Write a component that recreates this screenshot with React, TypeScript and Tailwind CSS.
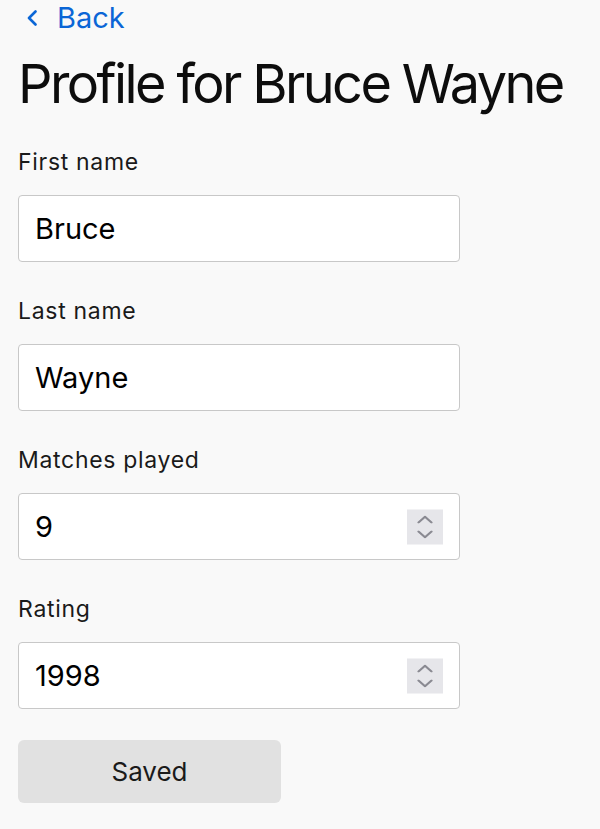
import { useState } from "react";

function Spinner() {
  return (
    <div className="absolute right-[17px] top-1/2 -translate-y-1/2 flex h-[35px] w-[36px] flex-col items-center justify-center gap-[7px] bg-[#e6e6ea]">
      <svg width="16" height="8" viewBox="0 0 16 8" fill="none">
        <path d="M1.5 7L8 1.2L14.5 7" stroke="#8a8a92" strokeWidth="2.2" strokeLinecap="round" strokeLinejoin="round" />
      </svg>
      <svg width="16" height="8" viewBox="0 0 16 8" fill="none">
        <path d="M1.5 1L8 6.8L14.5 1" stroke="#8a8a92" strokeWidth="2.2" strokeLinecap="round" strokeLinejoin="round" />
      </svg>
    </div>
  );
}

function Field({
  label,
  value,
  onChange,
  numeric,
}: {
  label: string;
  value: string;
  onChange: (v: string) => void;
  numeric?: boolean;
}) {
  return (
    <label className="flex flex-col gap-[19px]">
      <span className="text-[23px] leading-[28px] tracking-[0.03em] text-[#1a1a1a]">{label}</span>
      <div className="relative w-[442px]">
        <input
          value={value}
          inputMode={numeric ? "numeric" : undefined}
          onChange={(e) => onChange(e.target.value)}
          className="h-[67px] w-[442px] rounded-[4px] border border-[#c8c8c8] bg-white px-[16px] text-[29px] text-black outline-none"
        />
        {numeric && <Spinner />}
      </div>
    </label>
  );
}

export default function App() {
  const [first, setFirst] = useState("Bruce");
  const [last, setLast] = useState("Wayne");
  const [matches, setMatches] = useState("9");
  const [rating, setRating] = useState("1998");

  return (
    <div
      className="min-h-[829px] bg-[#f9f9f9] px-[18px]"
      style={{ fontFamily: "Inter, 'Noto Sans', sans-serif" }}
    >
      <a href="#" className="flex h-[36px] items-center gap-[19px] pl-[8px] text-[29px] leading-[36px] text-[#0b66d6]">
        <svg width="12" height="16" viewBox="0 0 12 16" fill="none">
          <path d="M9.5 1.5L3 8L9.5 14.5" stroke="#0b66d6" strokeWidth="2.6" strokeLinecap="round" strokeLinejoin="round" />
        </svg>
        <span>Back</span>
      </a>
      <h1 className="mt-[14px] whitespace-nowrap text-[54px] leading-[67px] tracking-[-0.048em] text-[#0d0d0d]">
        Profile for Bruce Wayne
      </h1>
      <form className="mt-[31px] flex flex-col gap-[35px]" onSubmit={(e) => e.preventDefault()}>
        <Field label="First name" value={first} onChange={setFirst} />
        <Field label="Last name" value={last} onChange={setLast} />
        <Field label="Matches played" value={matches} onChange={setMatches} numeric />
        <Field label="Rating" value={rating} onChange={setRating} numeric />
        <button
          type="submit"
          className="-mt-[4px] h-[63px] w-[263px] rounded-[6px] bg-[#e1e1e1] text-[26px] text-[#1a1a1a]"
        >
          Saved
        </button>
      </form>
    </div>
  );
}
